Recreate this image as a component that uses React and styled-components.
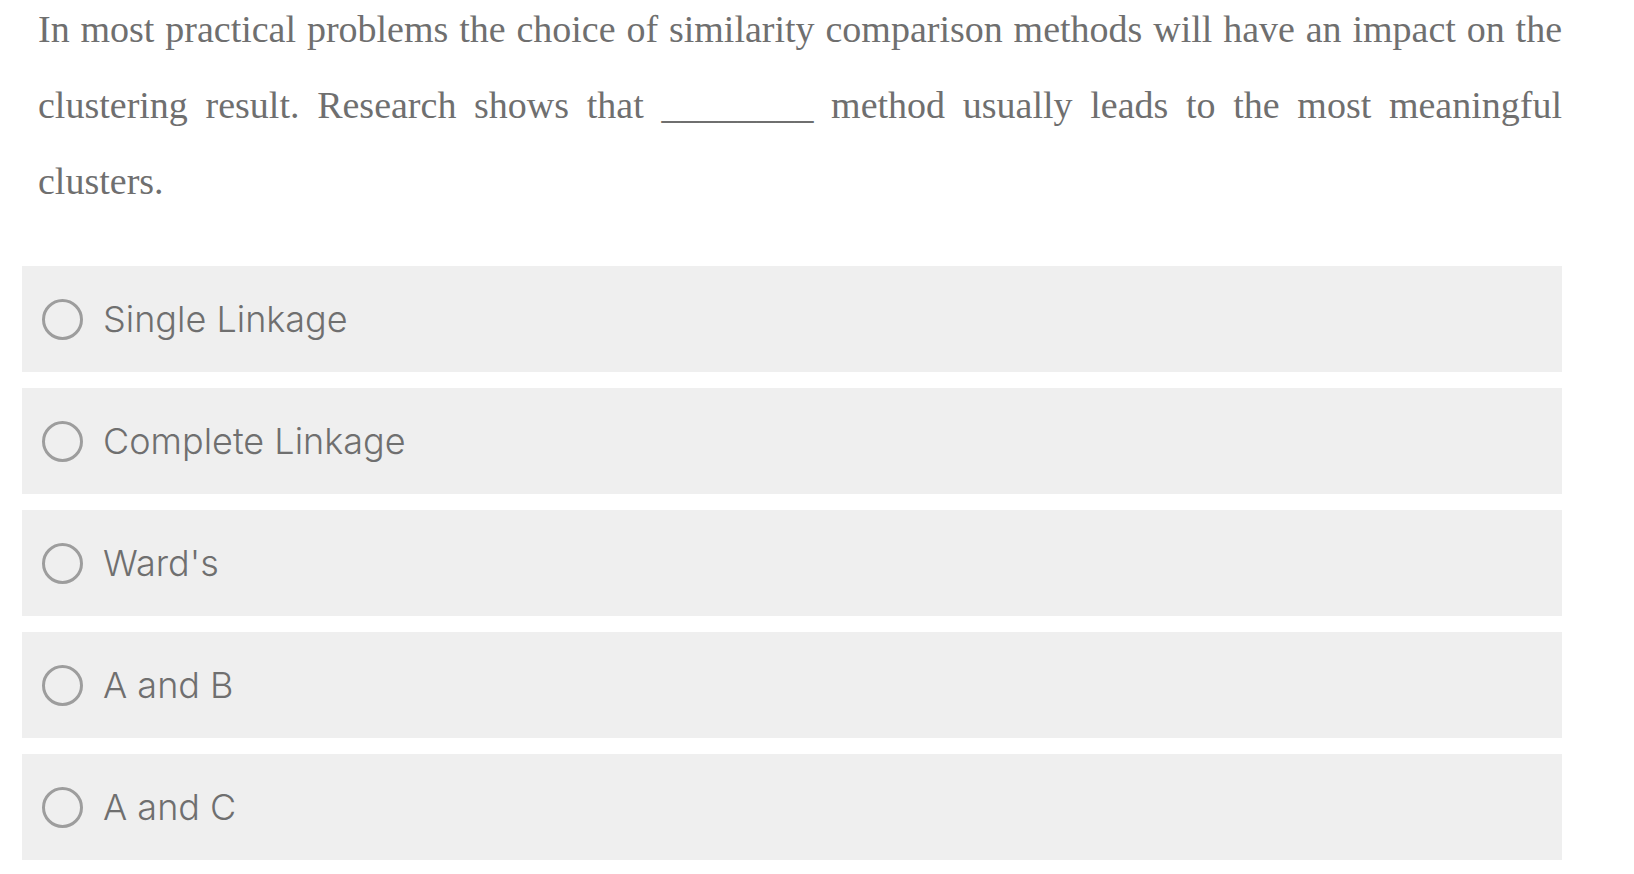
import React from "react";
import styled, { createGlobalStyle } from "styled-components";

const GlobalStyle = createGlobalStyle`
  html, body {
    margin: 0;
    padding: 0;
    background: #ffffff;
  }
  body {
    overflow: hidden;
  }
`;

const Page = styled.div`
  width: 1540px;
  padding-left: 22px;
  display: flex;
  flex-direction: column;
`;

const Question = styled.p`
  margin: -9px 0 0 0;
  padding-left: 16px;
  font-family: "Liberation Serif", "Times New Roman", serif;
  font-size: 38px;
  line-height: 76px;
  color: #6f6f6f;
  text-align: justify;
`;

const Options = styled.div`
  margin-top: 47px;
  display: flex;
  flex-direction: column;
  gap: 16px;
`;

const Option = styled.label`
  height: 106px;
  box-sizing: border-box;
  background: #efefef;
  display: flex;
  align-items: center;
  gap: 20px;
  padding: 0 20px;
  cursor: pointer;
`;

const Radio = styled.span`
  width: 41px;
  height: 41px;
  box-sizing: border-box;
  border: 3px solid #9d9d9d;
  border-radius: 50%;
  flex: none;
`;

const OptionText = styled.span`
  font-family: "Inter", "Noto Sans", sans-serif;
  font-weight: 300;
  font-size: 36px;
  color: #6f6f6f;
  letter-spacing: 0;
`;

const choices = ["Single Linkage", "Complete Linkage", "Ward's", "A and B", "A and C"];

export default function App() {
  return (
    <>
      <GlobalStyle />
      <Page>
        <Question>
          In most practical problems the choice of similarity comparison methods will have an
          impact on the clustering result. Research shows that ________ method usually leads to
          the most meaningful clusters.
        </Question>
        <Options>
          {choices.map((c) => (
            <Option key={c}>
              <Radio />
              <OptionText>{c}</OptionText>
            </Option>
          ))}
        </Options>
      </Page>
    </>
  );
}
